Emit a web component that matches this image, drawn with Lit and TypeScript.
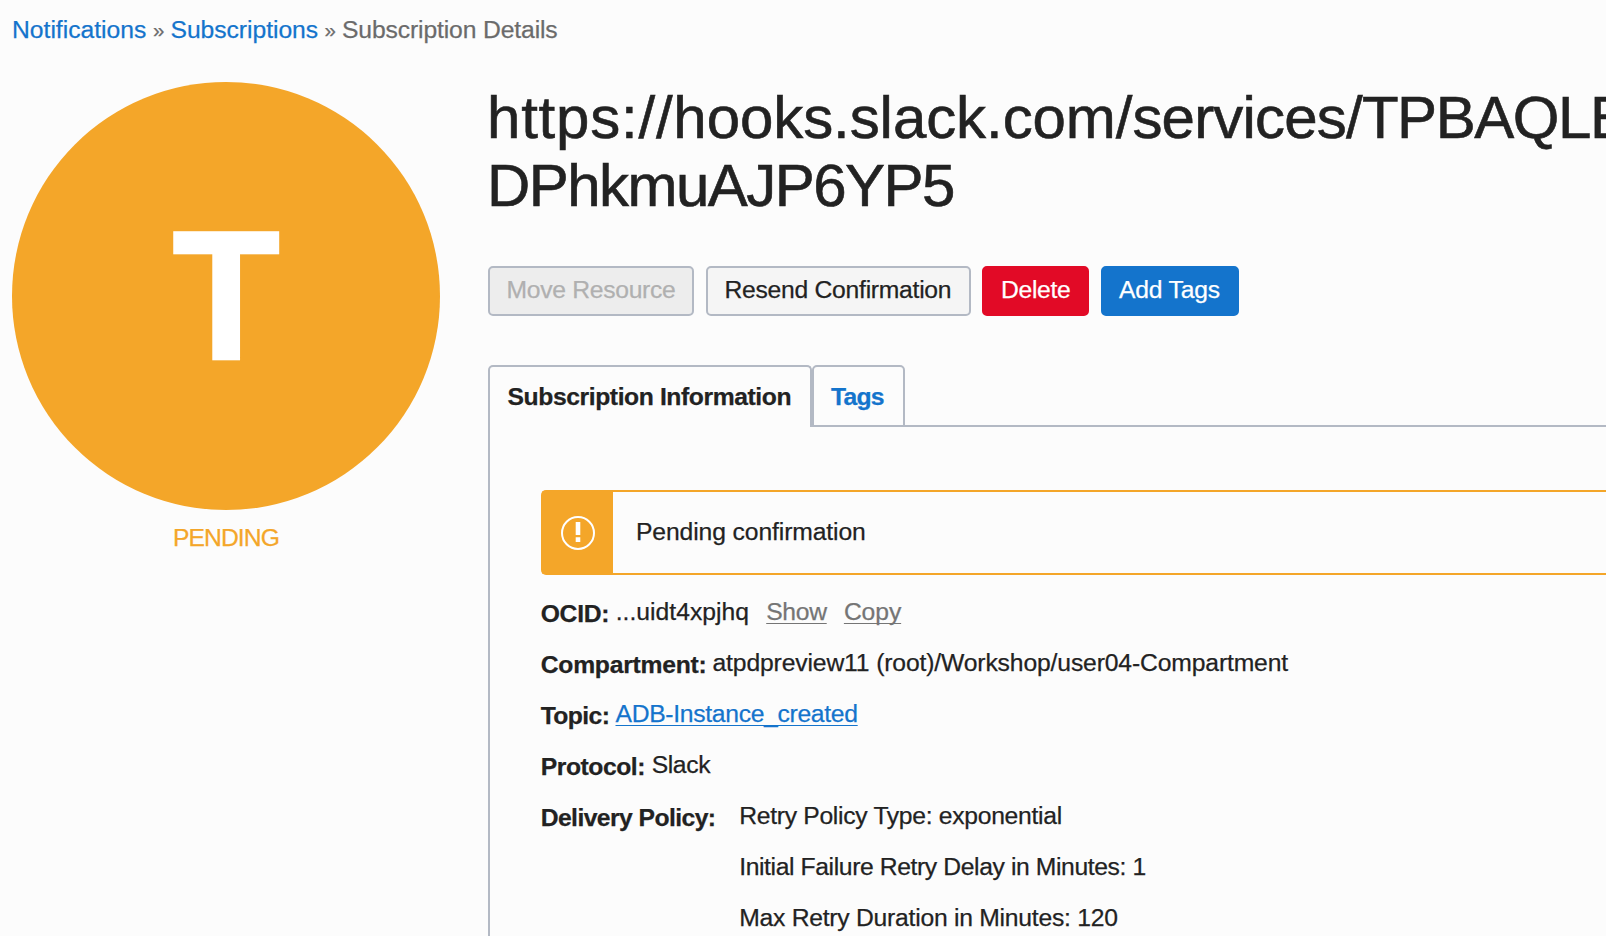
import { LitElement, html, css } from "lit";
import { customElement } from "lit/decorators.js";

@customElement("app-root")
export class AppRoot extends LitElement {
  static styles = css`
    :host {
      display: block;
      height: 936px;
      overflow: hidden;
      background: #fcfcfc;
      color: #222;
      font-family: "Liberation Sans", Arial, sans-serif;
      font-size: 24.7px;
      -webkit-text-stroke: 0.25px currentColor;
    }
    * { box-sizing: border-box; }
    .page { display: flex; flex-direction: column; height: 936px; padding: 14px 0 0 12px; white-space: nowrap; }
    .crumbs { display: flex; height: 31px; line-height: 31px; color: #6b6b6b; }
    a { color: #1474cc; text-decoration: none; }
    .c1 { width: 141px; letter-spacing: -0.01px; }
    .sep { width: 17.5px; font-size: 20.5px; }
    .c2 { width: 154px; letter-spacing: -0.05px; }
    .c3 { letter-spacing: -0.13px; }
    .body { display: grid; grid-template-columns: 428px 1fr; column-gap: 48px; flex: 1; min-height: 0; margin-top: 37px; }
    .avatar {
      width: 428px; height: 428px; border-radius: 50%;
      background: #f4a629; color: #fff;
      font-weight: 700; font-size: 184px; line-height: 426px; text-align: center;
      -webkit-text-stroke: 2.5px #fff;
    }
    .initial { display: inline-block; transform: scaleX(0.955); }
    .status { margin-top: 12px; line-height: 31px; text-align: center; color: #f4a629; letter-spacing: -0.93px; }
    .main { display: flex; flex-direction: column; min-width: 0; }
    h1 { margin: 2px 0 46px -1px; font-size: 60px; font-weight: 400; line-height: 68px; -webkit-text-stroke: 0.6px currentColor; }
    .l1, .l2 { display: block; }
    .scheme { letter-spacing: 0.78px; }
    .domain { letter-spacing: -0.07px; }
    .path { letter-spacing: -0.8px; }
    .token { letter-spacing: -1.45px; }
    .l2 { letter-spacing: -1.55px; }
    .actions { display: flex; height: 50px; }
    button {
      height: 50px; padding: 0 0 3px 16px; margin: 0 12px 0 0;
      border: 2px solid #b3b9c4; border-radius: 5px; background: #f5f5f5;
      font: inherit; color: #222; line-height: 43px; text-align: left;
    }
    .move { width: 206px; padding-left: 16.5px; background: #ededed; color: #b0b0b0; letter-spacing: -0.3px; }
    .resend { width: 265px; padding-left: 16.5px; margin-right: 11px; letter-spacing: -0.27px; }
    .delete { width: 107px; padding-left: 17px; background: #e20a26; border-color: #e20a26; color: #fff; letter-spacing: -0.33px; }
    .add { width: 138px; background: #1474cc; border-color: #1474cc; color: #fff; letter-spacing: -0.2px; }
    .tabs { display: flex; height: 62px; margin-top: 49px; font-weight: 700; line-height: 59px; }
    .tab { border: 2px solid #b3b9c4; border-radius: 5px 5px 0 0; padding-left: 17px; }
    .info { width: 324px; border-bottom: 0; padding-left: 17.5px; letter-spacing: -0.41px; }
    .tags { width: 93px; letter-spacing: -0.79px; color: #1474cc; }
    .rest { flex: 1; border-bottom: 2px solid #b3b9c4; }
    .panel { flex: 1; border-left: 2px solid #b3b9c4; padding: 63px 0 0 51px; min-height: 0; }
    .alert {
      display: flex; height: 85px; border: 2px solid #f4a629; border-width: 2px 0 2px 2px;
      border-radius: 5px 0 0 5px; line-height: 79px; letter-spacing: -0.11px;
    }
    .mark { width: 70px; height: 81px; background: #f4a629; display: flex; align-items: center; justify-content: center; }
    .mark svg { display: block; }
    .msg { padding-left: 23px; }
    .rows { margin: 11px 0 0 -0.3px; }
    .row { display: flex; height: 51px; line-height: 51px; }
    .label { font-weight: 700; line-height: 55px; }
    .ocid .label { width: 75px; letter-spacing: -0.3px; }
    .ocid .val { width: 150.5px; letter-spacing: 0.02px; }
    .ocid a { color: #757575; text-decoration: underline; text-decoration-thickness: 1px; text-underline-offset: 3px; text-decoration-skip-ink: none; }
    .show { width: 77.7px; letter-spacing: -0.31px; }
    .copy { letter-spacing: -0.1px; }
    .comp .label { width: 171.8px; letter-spacing: -0.24px; }
    .comp .val { letter-spacing: -0.14px; }
    .topic .label { width: 74.8px; letter-spacing: -0.6px; }
    .topic a { letter-spacing: -0.31px; text-decoration: underline; text-decoration-thickness: 1px; text-underline-offset: 3px; text-decoration-skip-ink: none; }
    .proto .label { width: 111px; letter-spacing: -0.45px; }
    .proto .val { letter-spacing: -0.4px; }
    .policy .label { width: 198.5px; letter-spacing: -0.57px; }
    .p1 { letter-spacing: -0.3px; }
    .p2 { letter-spacing: -0.39px; }
    .p3 { letter-spacing: -0.25px; }
  `;

  render() {
    return html`
      <div class="page">
        <nav class="crumbs">
          <a class="c1">Notifications</a><span class="sep">»</span>
          <a class="c2">Subscriptions</a><span class="sep">»</span>
          <span class="c3">Subscription Details</span>
        </nav>
        <div class="body">
          <aside>
            <div class="avatar"><span class="initial">T</span></div>
            <div class="status">PENDING</div>
          </aside>
          <main class="main">
            <h1><span class="l1"><span class="scheme">https://</span><span class="domain">hooks.slack.com/</span><span class="path">services/</span><span class="token">TPBAQLE</span></span><span class="l2">DPhkmuAJP6YP5</span></h1>
            <div class="actions">
              <button class="move" disabled>Move Resource</button>
              <button class="resend">Resend Confirmation</button>
              <button class="delete">Delete</button>
              <button class="add">Add Tags</button>
            </div>
            <div class="tabs">
              <div class="tab info">Subscription Information</div>
              <div class="tab tags">Tags</div>
              <div class="rest"></div>
            </div>
            <section class="panel">
              <div class="alert">
                <div class="mark">
                  <svg width="34" height="34" viewBox="0 0 34 34">
                    <circle cx="17" cy="17" r="16" fill="none" stroke="#fff" stroke-width="2" />
                    <path d="M14.7 6h4.6v13h-4.6zM14.7 21.3h4.6v4.6h-4.6z" fill="#fff" />
                  </svg>
                </div>
                <div class="msg">Pending confirmation</div>
              </div>
              <div class="rows">
                <div class="row ocid">
                  <span class="label">OCID:</span><span class="val">...uidt4xpjhq</span>
                  <span class="show"><a>Show</a></span><span class="copy"><a>Copy</a></span>
                </div>
                <div class="row comp">
                  <span class="label">Compartment:</span><span class="val">atpdpreview11 (root)/Workshop/user04-Compartment</span>
                </div>
                <div class="row topic"><span class="label">Topic:</span><a>ADB-Instance_created</a></div>
                <div class="row proto"><span class="label">Protocol:</span><span class="val">Slack</span></div>
                <div class="row policy">
                  <span class="label">Delivery Policy:</span>
                  <div>
                    <div class="p1">Retry Policy Type: exponential</div>
                    <div class="p2">Initial Failure Retry Delay in Minutes: 1</div>
                    <div class="p3">Max Retry Duration in Minutes: 120</div>
                  </div>
                </div>
              </div>
            </section>
          </main>
        </div>
      </div>
    `;
  }
}
